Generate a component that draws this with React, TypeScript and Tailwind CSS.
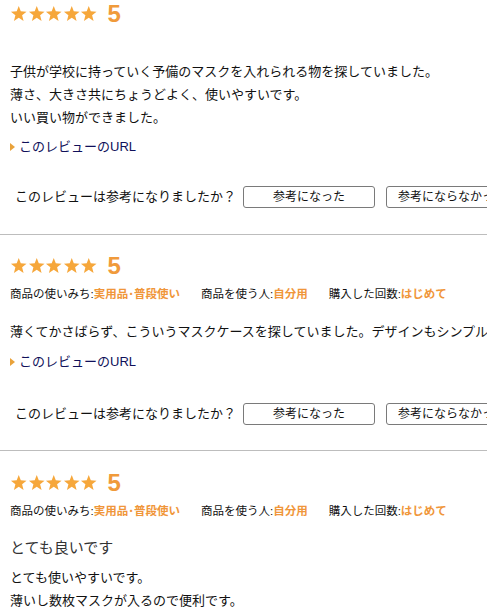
import React from "react";

const STAR = "12,1.2 14.8,8.6 22.7,9.1 16.6,14.1 18.6,21.8 12,17.5 5.4,21.8 7.4,14.1 1.3,9.1 9.2,8.6";

const Stars = () => (
  <div className="flex items-center h-6">
    <div className="flex">
      {[0, 1, 2, 3, 4].map((i) => (
        <svg key={i} viewBox="0 0 24 24" className="w-[17.5px] h-[17.5px]">
          <polygon fill="#F6A73B" points={STAR} />
        </svg>
      ))}
    </div>
    <span className="ml-[10px] text-[24px] font-bold leading-6 text-[#F09A3B] font-['Liberation_Sans',sans-serif]">
      5
    </span>
  </div>
);

const Meta = () => (
  <div className="mt-[6px] h-5 leading-5 text-[11.5px] flex whitespace-nowrap text-[#111]">
    <span>
      商品の使いみち:<b className="text-[#F0963A]">実用品･普段使い</b>
    </span>
    <span className="ml-[21px]">
      商品を使う人:<b className="text-[#F0963A]">自分用</b>
    </span>
    <span className="ml-[21px]">
      購入した回数:<b className="text-[#F0963A]">はじめて</b>
    </span>
  </div>
);

const UrlLink = ({ mt }: { mt: string }) => (
  <div className={`${mt} h-5 leading-5 flex items-center text-[13px] text-[#10105a]`}>
    <svg width="5" height="8" viewBox="0 0 5 8" className="mr-[4px]">
      <polygon points="0,0 5,4 0,8" fill="#E9A23A" />
    </svg>
    <span>このレビューのURL</span>
  </div>
);

const Help = ({ mt }: { mt: string }) => (
  <div className={`${mt} h-[22px] flex items-center pl-[15px] whitespace-nowrap text-[13px] text-[#111]`}>
    <span>このレビューは参考になりましたか？</span>
    <button className="ml-[7px] shrink-0 w-[132px] h-[22px] border border-[#7a7a7a] rounded-[3px] bg-white text-[12px] text-[#111] leading-[20px]">
      参考になった
    </button>
    <button className="ml-[11px] shrink-0 w-[132px] h-[22px] border border-[#7a7a7a] rounded-[3px] bg-white text-[12px] text-[#111] leading-[20px]">
      参考にならなかった
    </button>
  </div>
);

const Divider = ({ mt }: { mt: string }) => <div className={`${mt} h-px bg-[#bdbdbd] w-full`} />;

export default function App() {
  return (
    <div className="w-[487px] h-[612px] overflow-hidden bg-white font-['Liberation_Sans','Noto_Sans_CJK_JP',sans-serif]">
      {/* Review 1 */}
      <div className="pt-[2px]">
        <div className="pl-[10px]">
          <Stars />
          <div className="mt-[34px] text-[13px] leading-[23px] text-[#111]">
            <p>子供が学校に持っていく予備のマスクを入れられる物を探していました。</p>
            <p>薄さ、大きさ共にちょうどよく、使いやすいです。</p>
            <p>いい買い物ができました。</p>
          </div>
          <UrlLink mt="mt-[8px]" />
        </div>
        <Help mt="mt-[29px]" />
        <Divider mt="mt-[26px]" />
      </div>

      {/* Review 2 */}
      <div className="pt-[19px]">
        <div className="pl-[10px]">
          <Stars />
          <Meta />
          <div className="mt-[16px] text-[13px] leading-[23px] text-[#111] whitespace-nowrap">
            <p>薄くてかさばらず、こういうマスクケースを探していました。デザインもシンプルで良いです。</p>
          </div>
          <UrlLink mt="mt-[9px]" />
        </div>
        <Help mt="mt-[31px]" />
        <Divider mt="mt-[25px]" />
      </div>

      {/* Review 3 */}
      <div className="pt-[20px]">
        <div className="pl-[10px]">
          <Stars />
          <Meta />
          <div className="mt-[15px] h-6 leading-6 text-[15px] text-[#333]">とても良いです</div>
          <div className="mt-[6px] text-[13px] leading-[23px] text-[#111]">
            <p>とても使いやすいです。</p>
            <p>薄いし数枚マスクが入るので便利です。</p>
          </div>
        </div>
      </div>
    </div>
  );
}
